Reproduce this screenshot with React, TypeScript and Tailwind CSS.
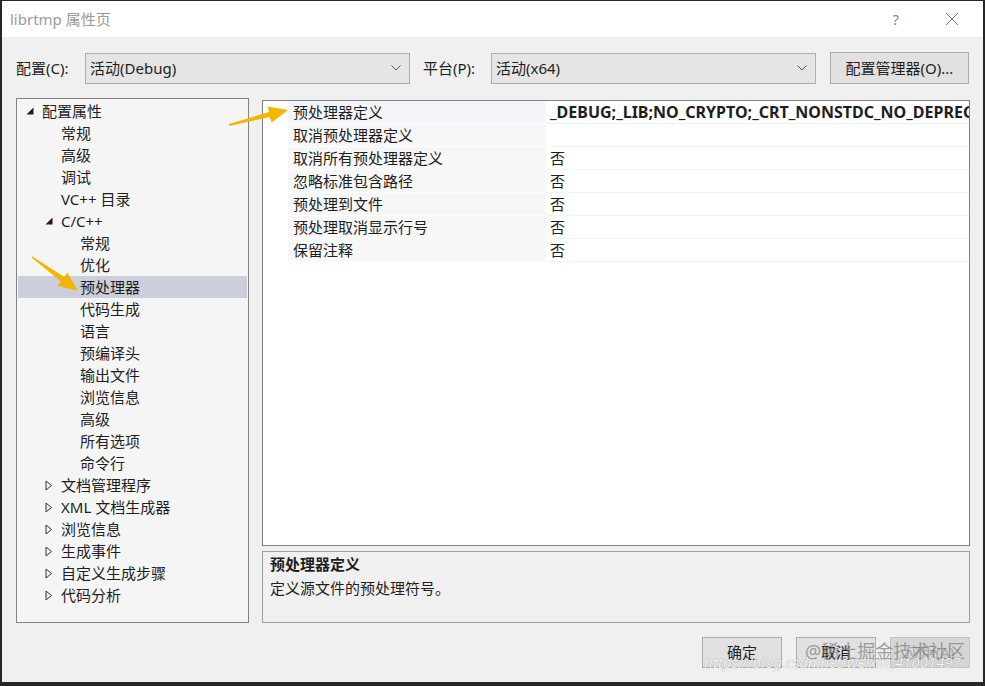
import React from "react"

type TreeItem = { label: string; level: 0 | 1 | 2; icon?: "open" | "closed"; selected?: boolean }

const tree: TreeItem[] = [
  { label: "配置属性", level: 0, icon: "open" },
  { label: "常规", level: 1 },
  { label: "高级", level: 1 },
  { label: "调试", level: 1 },
  { label: "VC++ 目录", level: 1 },
  { label: "C/C++", level: 1, icon: "open" },
  { label: "常规", level: 2 },
  { label: "优化", level: 2 },
  { label: "预处理器", level: 2, selected: true },
  { label: "代码生成", level: 2 },
  { label: "语言", level: 2 },
  { label: "预编译头", level: 2 },
  { label: "输出文件", level: 2 },
  { label: "浏览信息", level: 2 },
  { label: "高级", level: 2 },
  { label: "所有选项", level: 2 },
  { label: "命令行", level: 2 },
  { label: "文档管理程序", level: 1, icon: "closed" },
  { label: "XML 文档生成器", level: 1, icon: "closed" },
  { label: "浏览信息", level: 1, icon: "closed" },
  { label: "生成事件", level: 1, icon: "closed" },
  { label: "自定义生成步骤", level: 1, icon: "closed" },
  { label: "代码分析", level: 1, icon: "closed" },
]

const indent = ["pl-[8px]", "pl-[27px]", "pl-[46px]"]

const props = [
  { name: "预处理器定义", value: "_DEBUG;_LIB;NO_CRYPTO;_CRT_NONSTDC_NO_DEPRECATE;%(PreprocessorDefinitions)", bold: true },
  { name: "取消预处理器定义", value: "" },
  { name: "取消所有预处理器定义", value: "否" },
  { name: "忽略标准包含路径", value: "否" },
  { name: "预处理到文件", value: "否" },
  { name: "预处理取消显示行号", value: "否" },
  { name: "保留注释", value: "否" },
]

function Chevron() {
  return (
    <svg width="10" height="6" viewBox="0 0 10 6" className="shrink-0">
      <polyline points="0.5,0.5 5,5 9.5,0.5" fill="none" stroke="#555" strokeWidth="1" />
    </svg>
  )
}

function TreeIcon({ kind }: { kind?: "open" | "closed" }) {
  if (kind === "open")
    return (
      <svg width="8" height="8" viewBox="0 0 8 8">
        <polygon points="7.5,0.5 7.5,7.5 0.5,7.5" fill="#1e1e1e" />
      </svg>
    )
  if (kind === "closed")
    return (
      <svg width="8" height="11" viewBox="0 0 8 11">
        <polygon points="1,1 6.5,5.5 1,10" fill="none" stroke="#333" strokeWidth="1" />
      </svg>
    )
  return null
}

function Select({ value }: { value: string }) {
  return (
    <div className="w-[325px] h-[31px] flex items-center justify-between pl-[4px] pr-[8px] bg-[#e5e5e5] border border-[#adadad] text-[15px] text-[#1e1e1e]">
      <span>{value}</span>
      <Chevron />
    </div>
  )
}

function Button({ label, disabled }: { label: string; disabled?: boolean }) {
  return (
    <div
      className={
        disabled
          ? "w-[80px] h-[31px] flex items-center justify-center bg-[#d6d6d6] border border-[#c4c4c4] text-[15px] text-[#a8a8a8]"
          : "w-[80px] h-[31px] flex items-center justify-center bg-[#e1e1e1] border border-[#adadad] text-[15px] text-[#1e1e1e]"
      }
    >
      {label}
    </div>
  )
}

export default function App() {
  return (
    <div className="relative w-[985px] h-[686px] bg-[#262626] pl-[2px] pr-[2px] pt-[1px] pb-[4px] overflow-hidden font-['Noto_Sans','Noto_Sans_CJK_SC',sans-serif] leading-none">
      <div className="flex flex-col h-full bg-[#f0f0f0]">
        {/* title bar */}
        <div className="h-[37px] shrink-0 flex items-center bg-white pl-[8px] border-b border-[#ececec]">
          <span className="text-[15px] text-[#9a9a9a]">librtmp 属性页</span>
          <span className="ml-auto text-[15px] text-[#8a8a8a] mr-[46px]">?</span>
          <svg width="14" height="14" viewBox="0 0 14 14" className="mr-[24px]">
            <path d="M1 1 L13 13 M13 1 L1 13" stroke="#777" strokeWidth="1" />
          </svg>
        </div>

        <div className="flex-1 flex flex-col pl-[14px] pr-[13px] pt-[14px]">
          {/* config row */}
          <div className="h-[32px] flex items-center">
            <span className="w-[69px] text-[15px] text-[#1e1e1e]">配置(C):</span>
            <Select value="活动(Debug)" />
            <span className="ml-[13px] w-[68px] text-[15px] text-[#1e1e1e]">平台(P):</span>
            <Select value="活动(x64)" />
            <div className="ml-[14px] w-[139px] h-[32px] flex items-center justify-center bg-[#e1e1e1] border border-[#adadad] text-[15px] text-[#1e1e1e]">
              配置管理器(O)...
            </div>
          </div>

          {/* panels */}
          <div className="mt-[14px] flex gap-[13px]">
            <div className="w-[233px] h-[525px] bg-[#f5f5f5] border border-[#828282] pt-[1px]">
              {tree.map((t, i) => (
                <div
                  key={i}
                  className={
                    (t.selected ? "bg-[#cccedb] " : "") +
                    "mx-[1px] h-[22px] flex items-center " +
                    indent[t.level]
                  }
                >
                  <div className="w-[16px] flex items-center">
                    <TreeIcon kind={t.icon} />
                  </div>
                  <span className="text-[15px] text-[#1e1e1e] whitespace-nowrap">{t.label}</span>
                </div>
              ))}
            </div>

            <div className="w-[708px] flex flex-col pt-[2px]">
              <div className="h-[446px] bg-white border border-[#828282] overflow-hidden">
                {props.map((p, i) => (
                  <div key={i} className="h-[23px] flex">
                    <div className="w-[25px] shrink-0" />
                    <div
                      className={
                        (i === 0 ? "bg-[#f3f5f9] " : "bg-[#f7f7f7] ") +
                        "w-[258px] shrink-0 h-[23px] flex items-center pl-[5px] border-b border-white text-[15px] text-[#1e1e1e]"
                      }
                    >
                      {p.name}
                    </div>
                    <div
                      className={
                        (p.bold ? "font-bold text-[16px] " : "text-[15px] ") +
                        "flex-1 min-w-0 h-[23px] flex items-center pl-[4px] border-b border-[#f2f2f2] text-[#1e1e1e] whitespace-nowrap overflow-hidden"
                      }
                    >
                      {p.value}
                    </div>
                  </div>
                ))}
              </div>

              <div className="mt-[5px] h-[72px] border border-[#a0a0a0] bg-[#f0f0f0] pl-[7px] pt-[2px]">
                <div className="h-[20px] flex items-center font-bold text-[15px] text-[#1e1e1e]">预处理器定义</div>
                <div className="mt-[4px] h-[20px] flex items-center text-[15px] text-[#1e1e1e]">定义源文件的预处理符号。</div>
              </div>
            </div>
          </div>

          {/* buttons */}
          <div className="mt-[14px] flex justify-end gap-[14px]">
            <Button label="确定" />
            <Button label="取消" />
            <Button label="应用(A)" disabled />
          </div>
        </div>
      </div>

      {/* annotation arrows */}
      <svg className="absolute left-0 top-0 pointer-events-none" width="985" height="686">
        <polygon
          points="229,124 229.3,126 269.8,117 271.6,122.5 288,110 267.5,106.5 269,112"
          fill="#f5b400"
        />
        <polygon
          points="31.5,257.6 32.5,256.4 64.2,277 67.4,272.8 78,291 57.6,285.6 61,281.4"
          fill="#f5b400"
        />
      </svg>

      {/* watermark */}
      <div className="absolute left-[805px] top-[642px] text-[18px] text-[#7a7a7a]/70 whitespace-nowrap">@稀土掘金技术社区</div>
      <div className="absolute left-[704px] top-[655px] text-[15px] text-white/90 italic whitespace-nowrap [text-shadow:0_0_1px_rgba(0,0,0,0.45)]">
        https://blog.csdn.net/weixin_41001497
      </div>
    </div>
  )
}
